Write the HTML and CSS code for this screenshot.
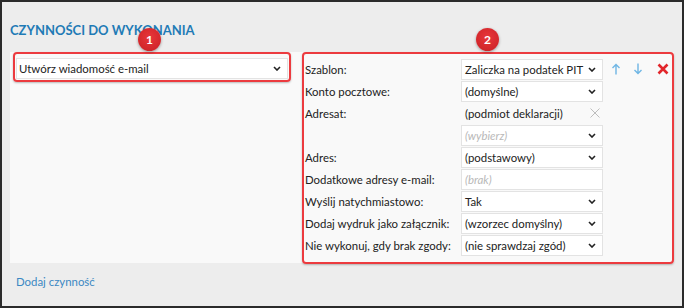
FILE: index.html
```html
<!DOCTYPE html>
<html>
	<head>
		<meta charset="utf-8">
		<title>Czynności do wykonania</title>
		<link rel="stylesheet" href="styles.css">
	</head>
	<body>
		<div class="frame">
			<h2 class="header">Czynności do wykonania</h2>
			<div class="panel">
				<div class="leftCol">
					<div class="mark markLeft">
						<div class="field wide">
							<span>Utwórz wiadomość e-mail</span>
							<svg class="chev" width="8" height="5" viewBox="0 0 8 5"><path d="M1 1 L4 4 L7 1" fill="none" stroke="#222" stroke-width="1.6"/></svg>
						</div>
					</div>
					<div class="badge badgeOne">1</div>
				</div>
				<div class="rightCol">
					<div class="mark markRight">
						<div class="row">
							<div class="label">Szablon:</div>
							<div class="field">
								<span>Zaliczka na podatek PIT</span>
								<svg class="chev" width="8" height="5" viewBox="0 0 8 5"><path d="M1 1 L4 4 L7 1" fill="none" stroke="#222" stroke-width="1.6"/></svg>
							</div>
							<div class="tools">
								<svg width="10" height="12" viewBox="0 0 10 12"><path d="M5 11.5 V1.5 M1.5 5 L5 1.5 L8.5 5" fill="none" stroke="#6fb6e4" stroke-width="1.4"/></svg>
								<svg width="10" height="12" viewBox="0 0 10 12"><path d="M5 0.5 V10.5 M1.5 7 L5 10.5 L8.5 7" fill="none" stroke="#6fb6e4" stroke-width="1.4"/></svg>
								<svg class="remove" width="12" height="12" viewBox="0 0 12 12"><path d="M1.5 1.5 L10.5 10.5 M10.5 1.5 L1.5 10.5" fill="none" stroke="#e2262b" stroke-width="2.6"/></svg>
							</div>
						</div>
						<div class="row">
							<div class="label">Konto pocztowe:</div>
							<div class="field">
								<span>(domyślne)</span>
								<svg class="chev" width="8" height="5" viewBox="0 0 8 5"><path d="M1 1 L4 4 L7 1" fill="none" stroke="#222" stroke-width="1.6"/></svg>
							</div>
						</div>
						<div class="row">
							<div class="label">Adresat:</div>
							<div class="field plain">
								<span>(podmiot deklaracji)</span>
								<svg class="clear" width="10" height="10" viewBox="0 0 10 10"><path d="M0.5 0.5 L9.5 9.5 M9.5 0.5 L0.5 9.5" fill="none" stroke="#bdbdbd" stroke-width="1"/></svg>
							</div>
						</div>
						<div class="row">
							<div class="label"></div>
							<div class="field">
								<span class="hint">(wybierz)</span>
								<svg class="chev" width="8" height="5" viewBox="0 0 8 5"><path d="M1 1 L4 4 L7 1" fill="none" stroke="#222" stroke-width="1.6"/></svg>
							</div>
						</div>
						<div class="row">
							<div class="label">Adres:</div>
							<div class="field">
								<span>(podstawowy)</span>
								<svg class="chev" width="8" height="5" viewBox="0 0 8 5"><path d="M1 1 L4 4 L7 1" fill="none" stroke="#222" stroke-width="1.6"/></svg>
							</div>
						</div>
						<div class="row">
							<div class="label">Dodatkowe adresy e-mail:</div>
							<div class="field">
								<span class="hint">(brak)</span>
							</div>
						</div>
						<div class="row">
							<div class="label">Wyślij natychmiastowo:</div>
							<div class="field">
								<span>Tak</span>
								<svg class="chev" width="8" height="5" viewBox="0 0 8 5"><path d="M1 1 L4 4 L7 1" fill="none" stroke="#222" stroke-width="1.6"/></svg>
							</div>
						</div>
						<div class="row">
							<div class="label">Dodaj wydruk jako załącznik:</div>
							<div class="field">
								<span>(wzorzec domyślny)</span>
								<svg class="chev" width="8" height="5" viewBox="0 0 8 5"><path d="M1 1 L4 4 L7 1" fill="none" stroke="#222" stroke-width="1.6"/></svg>
							</div>
						</div>
						<div class="row">
							<div class="label">Nie wykonuj, gdy brak zgody:</div>
							<div class="field">
								<span>(nie sprawdzaj zgód)</span>
								<svg class="chev" width="8" height="5" viewBox="0 0 8 5"><path d="M1 1 L4 4 L7 1" fill="none" stroke="#222" stroke-width="1.6"/></svg>
							</div>
						</div>
					</div>
					<div class="badge badgeTwo">2</div>
				</div>
			</div>
			<a class="addLink">Dodaj czynność</a>
		</div>
	</body>
</html>
```

FILE: styles.css
```css
body
{
	margin: 0;
	background-color: #ededed;
	font-family: Lato, "Open Sans", sans-serif;
	font-size: 11.4px;
	color: #222222;
}
.frame
{
	box-sizing: border-box;
	width: 684px;
	height: 308px;
	border: 2px solid #2b2b2b;
	padding: 0 8px;
}
.header
{
	margin: 0;
	padding: 20px 0 0 0;
	height: 50px;
	box-sizing: border-box;
	font-size: 13px;
	font-weight: bold;
	line-height: 16px;
	text-transform: uppercase;
	color: #1f7bb6;
}
.panel
{
	display: flex;
	width: 664px;
	height: 211px;
	background-color: #f9f9f9;
}
.leftCol
{
	position: relative;
	width: 294px;
}
.rightCol
{
	position: relative;
	flex: 1;
}
.mark
{
	border: 2px solid #ec3b3f;
	border-radius: 4px;
	box-shadow: 0 1px 2px rgba(0, 0, 0, 0.25);
}
.markLeft
{
	width: 278px;
	margin-left: 3px;
	padding: 4px 1px 1px 1px;
	box-sizing: border-box;
}
.markRight
{
	width: 372px;
	height: 212px;
	box-sizing: border-box;
	padding: 4px 0 0 0;
}
.row
{
	display: flex;
	align-items: center;
	height: 22px;
	white-space: nowrap;
}
.label
{
	width: 157px;
	padding-left: 1px;
	box-sizing: border-box;
}
.field
{
	display: flex;
	align-items: center;
	justify-content: space-between;
	box-sizing: border-box;
	width: 142px;
	height: 21px;
	padding: 0 6px 0 3px;
	background-color: #ffffff;
	border: 1px solid #e3e3e3;
}
.field.wide
{
	width: 272px;
	padding-left: 2px;
}
.field.plain
{
	background-color: transparent;
	border-color: transparent;
	padding-right: 2px;
}
.hint
{
	font-style: italic;
	color: #b8b8b8;
}
.tools
{
	display: flex;
	align-items: center;
	gap: 12px;
	margin-left: 8px;
}
.remove
{
	margin-left: 2px;
}
.badge
{
	position: absolute;
	width: 23px;
	height: 23px;
	border-radius: 50%;
	background: radial-gradient(circle at 50% 40%, #e8373b, #c91f24);
	box-shadow: 0 1px 3px rgba(0, 0, 0, 0.35);
	color: #ffffff;
	font-size: 12px;
	font-weight: bold;
	line-height: 23px;
	text-align: center;
}
.badgeOne
{
	left: 128px;
	top: -24px;
}
.badgeTwo
{
	left: 174px;
	top: -24px;
}
.addLink
{
	display: block;
	margin: 12px 0 0 6px;
	color: #3b88c3;
}
```
